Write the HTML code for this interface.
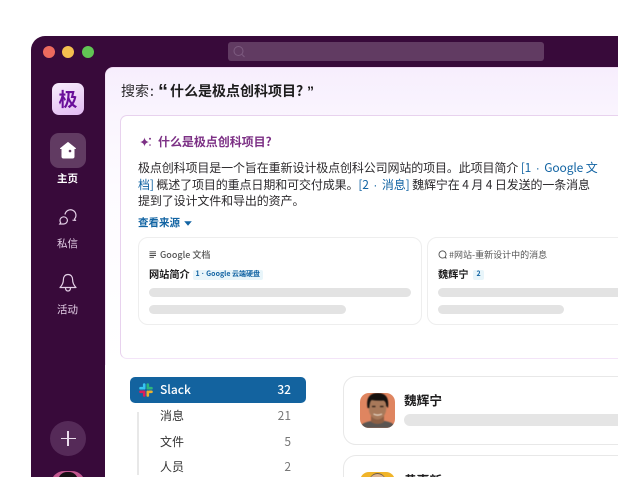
<!DOCTYPE html>
<html lang="zh"><head><meta charset="utf-8">
<style>
html,body{margin:0;padding:0;background:#fff;width:618px;height:477px;overflow:hidden}
body{position:relative;font-family:"Liberation Sans","Noto Sans CJK SC",sans-serif;color:#1d1c1d}
*{box-sizing:border-box}
.a{position:absolute;white-space:nowrap}
.f{font-family:"Noto Sans CJK SC","Liberation Sans",sans-serif}
.pill{position:absolute;background:#e3e3e3;border-radius:5px;height:9px}
#win{position:absolute;left:31px;top:36px;width:620px;height:441px;background:#380a3a;border-radius:14px 0 0 0;overflow:hidden}
.l{color:#1264a3}
.d{font-family:"Liberation Sans",sans-serif;margin:0 2px}
.t{margin:0 .5px}
#clip{position:absolute;left:0;top:0;width:618px;height:477px;overflow:hidden}
</style></head><body>
<div id="clip">
<div id="win"></div>
<div class="a" style="left:42.5px;top:45.5px;width:12px;height:12px;border-radius:50%;background:#ec6a5e"></div>
<div class="a" style="left:62px;top:45.5px;width:12px;height:12px;border-radius:50%;background:#f4bf4f"></div>
<div class="a" style="left:81.5px;top:45.5px;width:12px;height:12px;border-radius:50%;background:#61c554"></div>
<div class="a" style="left:228px;top:42px;width:316px;height:19px;border-radius:3px;background:#613b62"></div>
<svg class="a" style="left:232px;top:45px" width="14" height="13" viewBox="0 0 14 13" fill="none" stroke="#7d5c80" stroke-width="1"><circle cx="6.5" cy="6" r="4.5"/><path d="M10 9.5l2.5 2.5"/></svg>

<div class="a" style="left:52px;top:83px;width:32px;height:32px;border-radius:7px;background:linear-gradient(160deg,#f8effc,#e2b9f2)"></div>
<div class="a f" style="left:52px;top:83px;width:32px;line-height:32px;text-align:center;font-size:19px;font-weight:700;color:#6a0f9a">极</div>
<div class="a" style="left:50px;top:133px;width:35.5px;height:35px;border-radius:9px;background:#613b62"></div>
<svg class="a" style="left:58px;top:141px" width="20" height="19" viewBox="0 0 20 19"><path d="M10 1.5L17.5 7.5H16V15.5Q16 17 14.500 17H5.500Q4 17 4 15.500V7.500H2.500Z" fill="#fff" stroke="#fff" stroke-linejoin="round"/><circle cx="12" cy="10" r="1.3" fill="#613b62"/></svg>
<div class="a f" style="left:37.500px;width:60px;top:171.500px;text-align:center;font-size:10.500px;line-height:14px;font-weight:700;color:#fff">主页</div>
<svg class="a" style="left:58px;top:205.500px" width="20" height="21" viewBox="0 0 20 21" fill="none" stroke="#e3cfe6" stroke-width="1.2"><path d="M7 8.500a5.500 5.500 0 1 1 9.500 4.500l.8 1.300-2.800-.1"/><path d="M2 14.500a3.700 3.700 0 1 1 7.400 0 3.700 3.700 0 0 1-3.700 3.500H1.800l.9-1.300A3.500 3.500 0 0 1 2 14.500z"/></svg>
<div class="a f" style="left:37.500px;width:60px;top:237px;text-align:center;font-size:10.500px;line-height:14px;color:#e3cfe6">私信</div>
<svg class="a" style="left:58px;top:273px" width="20" height="20" viewBox="0 0 20 20" fill="none" stroke="#e3cfe6" stroke-width="1.2" stroke-linejoin="round"><path d="M10 1.500c-3 0-4.600 2.300-4.600 5.200 0 3-.8 5-3.400 7.800h16c-2.600-2.800-3.400-4.800-3.400-7.800C14.600 3.800 13 1.500 10 1.500z"/><path d="M7.500 14.500c0 2.400 1 3.500 2.500 3.500s2.500-1.100 2.500-3.500"/></svg>
<div class="a f" style="left:37.500px;width:60px;top:303px;text-align:center;font-size:10.500px;line-height:14px;color:#e3cfe6">活动</div>
<div class="a" style="left:50px;top:420.500px;width:35.500px;height:35px;border-radius:50%;background:#552a58"></div>
<div class="a" style="left:60.500px;top:437.500px;width:15px;height:1.500px;background:#eadcec"></div>
<div class="a" style="left:67.300px;top:430.500px;width:1.500px;height:15px;background:#eadcec"></div>
<div class="a" style="left:51px;top:471px;width:34px;height:34px;border-radius:13px;background:#c2578f"></div>
<div class="a" style="left:58px;top:472px;width:20px;height:22px;border-radius:9px 9px 0 0;background:#161014"></div>

<div class="a" style="left:105px;top:67px;width:520px;height:415px;border-radius:8px 0 0 0;background:linear-gradient(#f7eefd 0,#faf5fe 48px,#fdfbff 120px,#fff 300px);border-top:1px solid #f0d8f3;border-left:1px solid #f3e4f6"></div>
<div class="a" style="left:105px;top:365px;width:520px;height:115px;background:#fff"></div>

<div class="a f" style="left:121px;top:80px;font-size:14px;line-height:22px;color:#2c2a2d">搜索<span style="margin-left:1px">:</span></div>
<div class="a" style="left:158px;top:81px;font-size:20px;line-height:22px;font-weight:700;color:#1d1c1d;font-family:'Liberation Sans',sans-serif">“</div>
<div class="a f" style="left:170px;top:80px;font-size:14px;line-height:22px;font-weight:700;color:#1d1c1d">什么是极点创科项目?</div>
<div class="a" style="left:307px;top:80px;font-size:14px;line-height:22px;font-weight:700;color:#1d1c1d;font-family:'Liberation Sans',sans-serif">”</div>

<div class="a" style="left:120px;top:115px;width:510px;height:244px;border-radius:7px;background:#fff;border:1.500px solid #e8d2ee;border-bottom-color:#f3e4f8"></div>
<svg class="a" style="left:139px;top:136px" width="13" height="13" viewBox="0 0 13 13"><path d="M5.500 1.500Q6 5.300 9.800 6 6 6.800 5.500 10.500 5 6.800 1.200 6 5 5.300 5.500 1.500z" fill="#7c3085"/><circle cx="11" cy="2.800" r="1" fill="#7c3085"/><circle cx="11" cy="9" r=".8" fill="#7c3085"/></svg>
<div class="a f" style="left:158px;top:133px;font-size:12px;line-height:18px;font-weight:700;color:#7c3085;letter-spacing:-.05px">什么是极点创科项目?</div>
<div class="a f" style="left:138px;top:159px;font-size:12px;line-height:18px;color:#2c2a2d;letter-spacing:-.12px">极点创科项目是一个旨在重新设计极点创科公司网站的项目。此项目简介 <span class="l">[1 <span class="d">·</span> Google 文</span></div>
<div class="a f" style="left:138px;top:176px;font-size:12px;line-height:18px;color:#2c2a2d;letter-spacing:-.12px"><span class="l">档]</span> 概述了项目的重点日期和可交付成果。<span class="l">[2 <span class="d">·</span> 消息]</span> 魏辉宁在 4 月 4 日发送的一条消息</div>
<div class="a f" style="left:138px;top:192px;font-size:12px;line-height:18px;color:#2c2a2d;letter-spacing:-.12px">提到了设计文件和导出的资产。</div>
<div class="a f" style="left:138px;top:215px;font-size:10.500px;line-height:16px;font-weight:700;color:#1264a3">查看来源</div>
<svg class="a" style="left:184px;top:221px" width="8" height="5" viewBox="0 0 8 5"><path d="M.2.200h7.600L4 4.800z" fill="#1264a3"/></svg>

<div class="a" style="left:137.500px;top:237px;width:284px;height:88px;border:1px solid #eee;border-radius:10px;background:#fff"></div>
<svg class="a" style="left:149px;top:251px" width="8" height="7" viewBox="0 0 8 7" stroke="#444" stroke-width=".9"><path d="M.500.800h6.500M.500 2.700h6.500M.500 4.500h6.500M.500 6.300h4.500"/></svg>
<div class="a f" style="left:160px;top:248px;font-size:9px;line-height:13px;font-weight:500;color:#555">Google 文档</div>
<div class="a f" style="left:149px;top:267px;font-size:10.200px;line-height:14px;font-weight:700;color:#1d1c1d">网站简介</div>
<div class="a" style="left:193px;top:270px;width:70px;height:9.500px;background:#e8f5fa;border-radius:2px"></div>
<div class="a f" style="left:195.500px;top:269px;font-size:7px;line-height:11px;font-weight:700;color:#1264a3">1 <span class="d t" style="margin:0 .5px">·</span> Google 云端硬盘</div>
<div class="pill" style="left:148.500px;top:288px;width:262px"></div>
<div class="pill" style="left:148.500px;top:305px;width:197.500px"></div>

<div class="a" style="left:427px;top:237px;width:210px;height:88px;border:1px solid #eee;border-radius:10px;background:#fff"></div>
<svg class="a" style="left:438px;top:250px" width="9" height="9" viewBox="0 0 9 9" fill="none" stroke="#555" stroke-width=".9"><path d="M1 4.500a3.500 3.500 0 1 1 6.300 2l.7 1.500-1.800-.4A3.500 3.500 0 0 1 1 4.500z"/></svg>
<div class="a f" style="left:449px;top:248px;font-size:9px;line-height:13px;color:#555">#网站-重新设计中的消息</div>
<div class="a f" style="left:438px;top:267px;font-size:10.200px;line-height:14px;font-weight:700;color:#1d1c1d">魏辉宁</div>
<div class="a" style="left:473px;top:270px;width:10.500px;height:9.500px;background:#e8f5fa;border-radius:2px"></div>
<div class="a f" style="left:476.500px;top:269px;font-size:7px;line-height:11px;font-weight:700;color:#1264a3">2</div>
<div class="pill" style="left:438px;top:288px;width:190px"></div>
<div class="pill" style="left:438px;top:305px;width:126px"></div>

<div class="a" style="left:130px;top:377px;width:176px;height:26px;border-radius:5px;background:#13639f"></div>
<svg class="a" style="left:139px;top:383px" width="14" height="14" viewBox="0 0 14 14" stroke-width="2.600" stroke-linecap="round" fill="none"><path d="M5.200 1.500v3.700" stroke="#36c5f0"/><path d="M1.500 5.200h2" stroke="#36c5f0"/><path d="M12.500 5.200H8.800" stroke="#2eb67d"/><path d="M8.800 1.500v2" stroke="#2eb67d"/><path d="M8.800 12.500V8.800" stroke="#ecb22e"/><path d="M12.500 8.800h-2" stroke="#ecb22e"/><path d="M1.500 8.800h3.700" stroke="#e01e5a"/><path d="M5.200 12.500v-2" stroke="#e01e5a"/></svg>
<div class="a f" style="left:160px;top:381px;font-size:12px;line-height:18px;font-weight:500;color:#fff">Slack</div>
<div class="a f" style="right:327px;top:381px;font-size:12px;line-height:18px;font-weight:500;color:#fff">32</div>
<div class="a" style="left:137px;top:412px;width:1.500px;height:63px;background:#e8e8e8"></div>
<div class="a f" style="left:160px;top:406.500px;font-size:12px;line-height:18px;color:#333">消息</div>
<div class="a f" style="right:327px;top:406.500px;font-size:12px;line-height:18px;color:#777">21</div>
<div class="a f" style="left:160px;top:432.500px;font-size:12px;line-height:18px;color:#333">文件</div>
<div class="a f" style="right:327px;top:432.500px;font-size:12px;line-height:18px;color:#777">5</div>
<div class="a f" style="left:160px;top:458px;font-size:12px;line-height:18px;color:#333">人员</div>
<div class="a f" style="right:327px;top:458px;font-size:12px;line-height:18px;color:#777">2</div>

<div class="a" style="left:343px;top:376px;width:300px;height:69px;border:1px solid #e8e8e8;border-radius:13px;background:#fff"></div>
<svg class="a" style="left:360px;top:393px;border-radius:9px" width="35" height="35" viewBox="0 0 35 35">
<rect width="35" height="35" fill="#df8560"/>
<g style="filter:blur(.4px)">
<path d="M0 35v-2q4-4 11-5l7-1 7 1q7 1 10 5v2z" fill="#5a5552"/>
<path d="M11 22h13v7q-6 4-13 0z" fill="#8d5f44"/>
<ellipse cx="17.500" cy="15" rx="8.800" ry="11.500" fill="#a8795a"/>
<path d="M7.500 15Q5 0 18 0q12 0 10 15l-1.800-2q0-4-2.500-5.500Q17 8 11.500 7 9.500 9 9.300 15z" fill="#15110f"/>
<path d="M12 13.500h3.500M20 13.500h3.500" stroke="#2a1c14" stroke-width="1.200"/>
<path d="M13.500 21q4 2.200 8.500 0" stroke="#e8d8c8" stroke-width="1.200" fill="none"/>
</g>
</svg>
<div class="a f" style="left:404px;top:391px;font-size:12.700px;line-height:18px;font-weight:700;color:#1d1c1d">魏辉宁</div>
<div class="a" style="left:404px;top:414px;width:240px;height:12px;border-radius:6px;background:#e5e5e5"></div>

<div class="a" style="left:343px;top:455px;width:300px;height:60px;border:1px solid #e8e8e8;border-radius:13px;background:#fff"></div>
<div class="a" style="left:360px;top:471.500px;width:35px;height:35px;border-radius:9px;background:#f0b429"></div>
<div class="a" style="left:368px;top:472.500px;width:19px;height:24px;border-radius:50%;background:#dcb48e;border-top:1.500px solid #6b5a48"></div>
<div class="a f" style="left:404px;top:470.500px;font-size:12.700px;line-height:18px;font-weight:700;color:#1d1c1d">黄嘉新</div>
</div>
</body></html>
